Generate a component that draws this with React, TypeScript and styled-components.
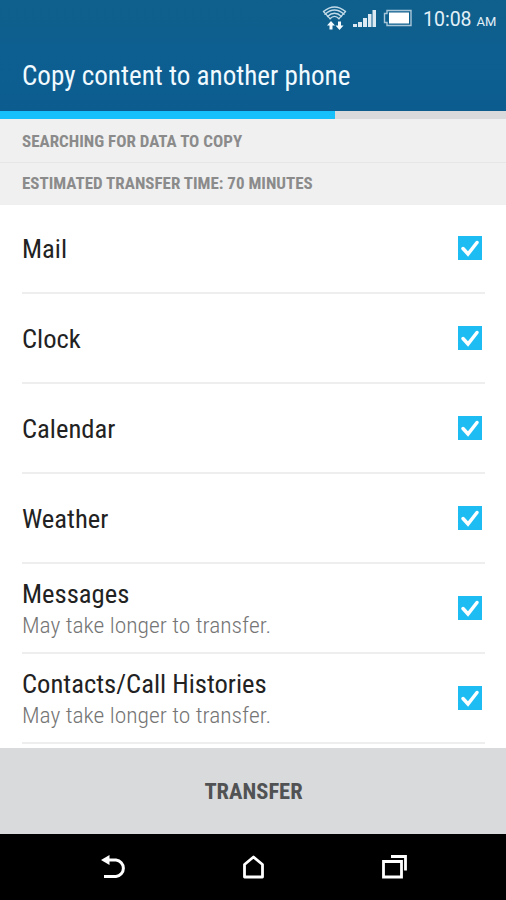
import React from "react";
import styled, { createGlobalStyle } from "styled-components";

const GlobalStyle = createGlobalStyle`
  * { box-sizing: border-box; }
  body { margin: 0; background: #fff; }
`;

const Screen = styled.div`
  width: 506px;
  height: 900px;
  display: flex;
  flex-direction: column;
  overflow: hidden;
  background: #fff;
  font-family: "Roboto Condensed", Roboto, sans-serif;
  font-stretch: 75%;
`;

const Header = styled.header`
  height: 111px;
  flex: none;
  background: linear-gradient(#0f608c 0, #0e5f8d 34px, #0d5f92 48px, #0c5c8f 100%);
  color: #f0faff;
`;

const StatusBar = styled.div`
  height: 38px;
  display: flex;
  align-items: flex-start;
  padding: 5px 0 0 322px;
`;

const Clock = styled.div`
  display: flex;
  align-items: baseline;
  gap: 5px;
  margin-left: 11px;
  font: 400 19.5px/30px Roboto, sans-serif;
  font-stretch: 98%;
  color: #e2f0f8;
`;

const Meridiem = styled.span`
  font-size: 13px;
`;

const Title = styled.h1`
  margin: 0;
  padding: 21px 0 0 22px;
  font-size: 27.1px;
  line-height: 34px;
  font-weight: 400;
`;

const Track = styled.div`
  height: 8px;
  flex: none;
  background: #d9dadb;
`;

const Progress = styled.div`
  height: 8px;
  width: 66.2%;
  background: #15c0fb;
`;

const Notice = styled.div`
  height: 43px;
  flex: none;
  padding: 0 22px;
  background: #f0f0f0;
  color: #8b8b8b;
  font-size: 17px;
  font-weight: 700;
  line-height: 44px;
  & + & { border-top: 1px solid #e6e6e6; line-height: 40px; }
`;

const List = styled.ul`
  margin: 0;
  padding: 0 21px 0 22px;
  flex: 1;
  min-height: 0;
  overflow: hidden;
  list-style: none;
`;

const Row = styled.li`
  height: 90px;
  display: flex;
  align-items: center;
  justify-content: space-between;
  padding-right: 3px;
  border-bottom: 2px solid #eeeeee;
  &:first-child { height: 89px; padding-bottom: 1px; }
`;

const Name = styled.div<{ $single: boolean }>`
  padding-top: ${(p) => (p.$single ? 2 : 0)}px;
  font-size: 26.6px;
  line-height: 34px;
  font-weight: 370;
  color: #222;
`;

const Detail = styled.div`
  width: max-content;
  font-size: 22px;
  line-height: 29px;
  font-weight: 300;
  color: #757575;
  transform: scaleX(1.07);
  transform-origin: 0 50%;
`;

const Box = styled.span`
  width: 24px;
  height: 24px;
  flex: none;
  background: #1dbdf3;
  svg { display: block; }
`;

const Transfer = styled.button`
  height: 86px;
  flex: none;
  display: flex;
  justify-content: center;
  align-items: center;
  border: 0;
  padding: 0 0 0 1px;
  background: #d9dadc;
  color: #515254;
  font: inherit;
  font-stretch: 75%;
  font-size: 22.5px;
  font-weight: 700;
`;

const NavBar = styled.nav`
  height: 66px;
  flex: none;
  display: flex;
  justify-content: space-between;
  padding: 18px 97px 0 99px;
  background: #000;
`;

const items = [
  { name: "Mail" },
  { name: "Clock" },
  { name: "Calendar" },
  { name: "Weather" },
  { name: "Messages", detail: "May take longer to transfer." },
  { name: "Contacts/Call Histories", detail: "May take longer to transfer." },
];

const StatusIcons = () => (
  <svg width="90" height="28" viewBox="322 5 90 28" fill="none">
    <g stroke="#c4dbe9" strokeWidth="1.400" strokeLinecap="round">
      <path d="M323.500 11.500Q334.500 2.500 345.500 11.500" />
      <path d="M325 14.200Q334.500 6 344 14.200" />
      <path d="M327.500 16.500Q334.500 10 341.500 16.500" />
      <path d="M330 18.700Q334.500 14 339 18.700" />
      <path d="M323.500 11.500L330 18.700M345.500 11.500L339 18.700" strokeWidth="1.200" />
    </g>
    <path d="M331 21l4 4.500h-2.500v4h-3v-4H327zM339.500 30l-4-4.500h2.500v-4h3v4h2.500z" fill="#f4fbff" />
    <path d="M353 24h4v3h-4zM358 22h4v5h-4zM363 18h4v9h-4zM368 14h3.500v13h-3.500zM372.500 10h3.500v17h-3.500z" fill="#dce9f2" />
    <path d="M387 10.500h24v15h-24v-3h-2.500v-9h2.500z" stroke="#a9c6d9" strokeWidth="1.400" />
    <path d="M389 12.500h20v11h-20z" fill="#fff" />
  </svg>
);

export default function App() {
  return (
    <Screen>
      <GlobalStyle />
      <Header>
        <StatusBar>
          <StatusIcons />
          <Clock>
            10:08 <Meridiem>AM</Meridiem>
          </Clock>
        </StatusBar>
        <Title>Copy content to another phone</Title>
      </Header>
      <Track>
        <Progress />
      </Track>
      <Notice>SEARCHING FOR DATA TO COPY</Notice>
      <Notice>ESTIMATED TRANSFER TIME: 70 MINUTES</Notice>
      <List>
        {items.map((item) => (
          <Row key={item.name}>
            <div>
              <Name $single={!item.detail}>{item.name}</Name>
              {item.detail && <Detail>{item.detail}</Detail>}
            </div>
            <Box>
              <svg width="24" height="24" viewBox="0 0 24 24" fill="none">
                <path d="M5 12.500l5 5.500L19 6.500" stroke="#fff" strokeWidth="3.500" strokeLinecap="round" />
              </svg>
            </Box>
          </Row>
        ))}
      </List>
      <Transfer>TRANSFER</Transfer>
      <NavBar>
        <svg width="28" height="28" viewBox="99 852 28 28" fill="none">
          <path d="M108 860h8a8.300 8.300 0 0 1 0 16.500h-12" stroke="#fff" strokeWidth="3" />
          <path d="M101 860l8.500-5v10z" fill="#fff" />
        </svg>
        <svg width="28" height="28" viewBox="240 852 28 28" fill="none">
          <path d="M244.500 864.500l9-7.500 9 7.500v12.500h-18z" stroke="#fff" strokeWidth="2.800" strokeLinejoin="round" />
        </svg>
        <svg width="28" height="28" viewBox="381 852 28 28" fill="none">
          <path d="M383.500 861.500h18v15.500h-18z" stroke="#fff" strokeWidth="2.800" />
          <path d="M391 856.500h14.500v14" stroke="#fff" strokeWidth="2.800" />
        </svg>
      </NavBar>
    </Screen>
  );
}
